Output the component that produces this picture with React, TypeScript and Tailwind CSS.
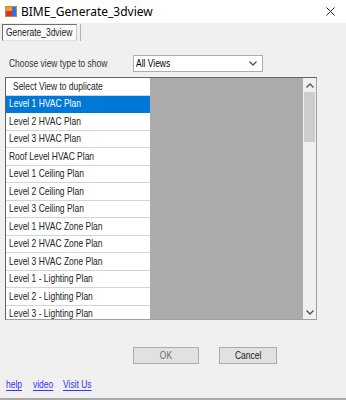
import React from "react";

const views = [
    "Level 1 HVAC Plan",
    "Level 2 HVAC Plan",
    "Level 3 HVAC Plan",
    "Roof Level HVAC Plan",
    "Level 1 Ceiling Plan",
    "Level 2 Ceiling Plan",
    "Level 3 Ceiling Plan",
    "Level 1 HVAC Zone Plan",
    "Level 2 HVAC Zone Plan",
    "Level 3 HVAC Zone Plan",
    "Level 1 - Lighting Plan",
    "Level 2 - Lighting Plan",
    "Level 3 - Lighting Plan",
];

// the dialog font renders narrow, so squeeze the text horizontally
function Txt({ children, center = false, link = false }: { children: React.ReactNode; center?: boolean; link?: boolean }) {
    return (
        <span
            className={[
                "inline-block whitespace-nowrap scale-x-[0.77]",
                center ? "origin-center" : "origin-left",
                link ? "underline underline-offset-2" : "",
            ].join(" ")}
        >
            {children}
        </span>
    );
}

function AppIcon() {
    return (
        <svg width="12" height="11" viewBox="0 0 12 11">
            <rect x="0.5" y="0.5" width="11" height="10" fill="#f4d9a0" stroke="#b08d57" />
            <rect x="1" y="1" width="6" height="4" fill="#f0a030" />
            <rect x="7" y="1" width="4" height="9" fill="#3a6fd8" />
            <rect x="1" y="5" width="6" height="5" fill="#e0302a" />
        </svg>
    );
}

function Chevron({ up = false }: { up?: boolean }) {
    return (
        <svg width="8" height="5" viewBox="0 0 8 5">
            <polyline
                points={up ? "0.5,4.5 4,1 7.5,4.5" : "0.5,0.5 4,4 7.5,0.5"}
                fill="none"
                stroke="#505050"
                strokeWidth="1.3"
            />
        </svg>
    );
}

function ViewRow({ label, selected }: { label: string; selected?: boolean }) {
    return (
        <div
            className={
                selected
                    ? "h-[17.5px] flex items-center pl-[3px] bg-[#0078d7] text-white border-b border-[#0078d7]"
                    : "h-[17.5px] flex items-center pl-[3px] bg-white text-[#222] border-b border-[#d4d4d4]"
            }
        >
            <Txt>{label}</Txt>
        </div>
    );
}

export default function App() {
    return (
        <div className="w-[346px] h-[400px] flex flex-col bg-[#f0f0f0] font-['Liberation_Sans',Arial,sans-serif] text-[11px] leading-none overflow-hidden">
            {/* title bar */}
            <div className="h-[23px] bg-white flex items-center pl-[5px] pr-[11px] shrink-0">
                <AppIcon />
                <span className="ml-[4px] text-[12px] text-black font-['Noto_Sans',sans-serif]">
                    BIME_Generate_3dview
                </span>
                <svg className="ml-auto" width="9" height="9" viewBox="0 0 9 9">
                    <path d="M0.5 0.5 L8.5 8.5 M8.5 0.5 L0.5 8.5" stroke="#222" strokeWidth="1" />
                </svg>
            </div>

            {/* tab strip */}
            <div className="mt-[1px] flex items-stretch h-[17px] pl-[2px]">
                <div className="w-[75px] flex items-center justify-center bg-[#fbfbfb] border-l border-t border-[#6d6d6d] border-r border-r-[#c8c8c8] border-b border-b-[#e3e3e3] text-[#222]">
                    <Txt center>Generate_3dview</Txt>
                </div>
                <div className="ml-[3px] w-px bg-[#b4b4b4]" />
            </div>

            {/* view type */}
            <div className="mt-[14px] flex items-center h-[17px]">
                <span className="ml-[9px] w-[124px] text-[#333]">
                    <Txt>Choose view type to show</Txt>
                </span>
                <div className="w-[130px] h-full bg-white border border-[#adadad] flex items-center pl-[2px] pr-[5px]">
                    <span className="text-black">
                        <Txt>All Views</Txt>
                    </span>
                    <span className="ml-auto flex"><Chevron /></span>
                </div>
            </div>

            {/* list box */}
            <div className="mt-[5px] ml-[5px] w-[312px] h-[243px] flex border-l border-t border-[#646464] border-r border-r-[#a0a0a0] border-b border-b-[#a0a0a0] overflow-hidden">
                <div className="w-[144px] shrink-0 bg-white">
                    <div className="h-[17.5px] flex items-center pl-[7px] bg-white text-[#222] border-b border-[#d4d4d4]">
                        <Txt>Select View to duplicate</Txt>
                    </div>
                    {views.map((v, i) => (
                        <ViewRow key={v} label={v} selected={i === 0} />
                    ))}
                </div>
                <div className="flex-1 bg-[#ababab]" />
                <div className="w-[13px] shrink-0 bg-[#f0f0f0] flex flex-col items-center">
                    <div className="h-[14px] flex items-center justify-center"><Chevron up /></div>
                    <div className="w-[11px] h-[50px] bg-[#cdcdcd]" />
                    <div className="flex-1" />
                    <div className="h-[14px] flex items-center justify-center"><Chevron /></div>
                </div>
            </div>

            {/* buttons */}
            <div className="mt-[27px] flex gap-[20px] pl-[133px]">
                <button
                    type="button"
                    className="w-[66px] h-[17px] bg-[#e1e1e1] border border-[#adadad] text-[#6d6d6d] flex items-center justify-center"
                >
                    <Txt center>OK</Txt>
                </button>
                <button
                    type="button"
                    className="w-[58px] h-[17px] bg-[#e1e1e1] border border-[#adadad] text-[#1a1a1a] flex items-center justify-center"
                >
                    <Txt center>Cancel</Txt>
                </button>
            </div>

            {/* links */}
            <div className="mt-[15px] flex pl-[6px] text-[#3333ff]">
                <a href="#" className="w-[27px]"><Txt link>help</Txt></a>
                <a href="#" className="w-[30px]"><Txt link>video</Txt></a>
                <a href="#"><Txt link>Visit Us</Txt></a>
            </div>

            <div className="mt-auto h-[2px] bg-[#a8a8a8]" />
        </div>
    );
}
